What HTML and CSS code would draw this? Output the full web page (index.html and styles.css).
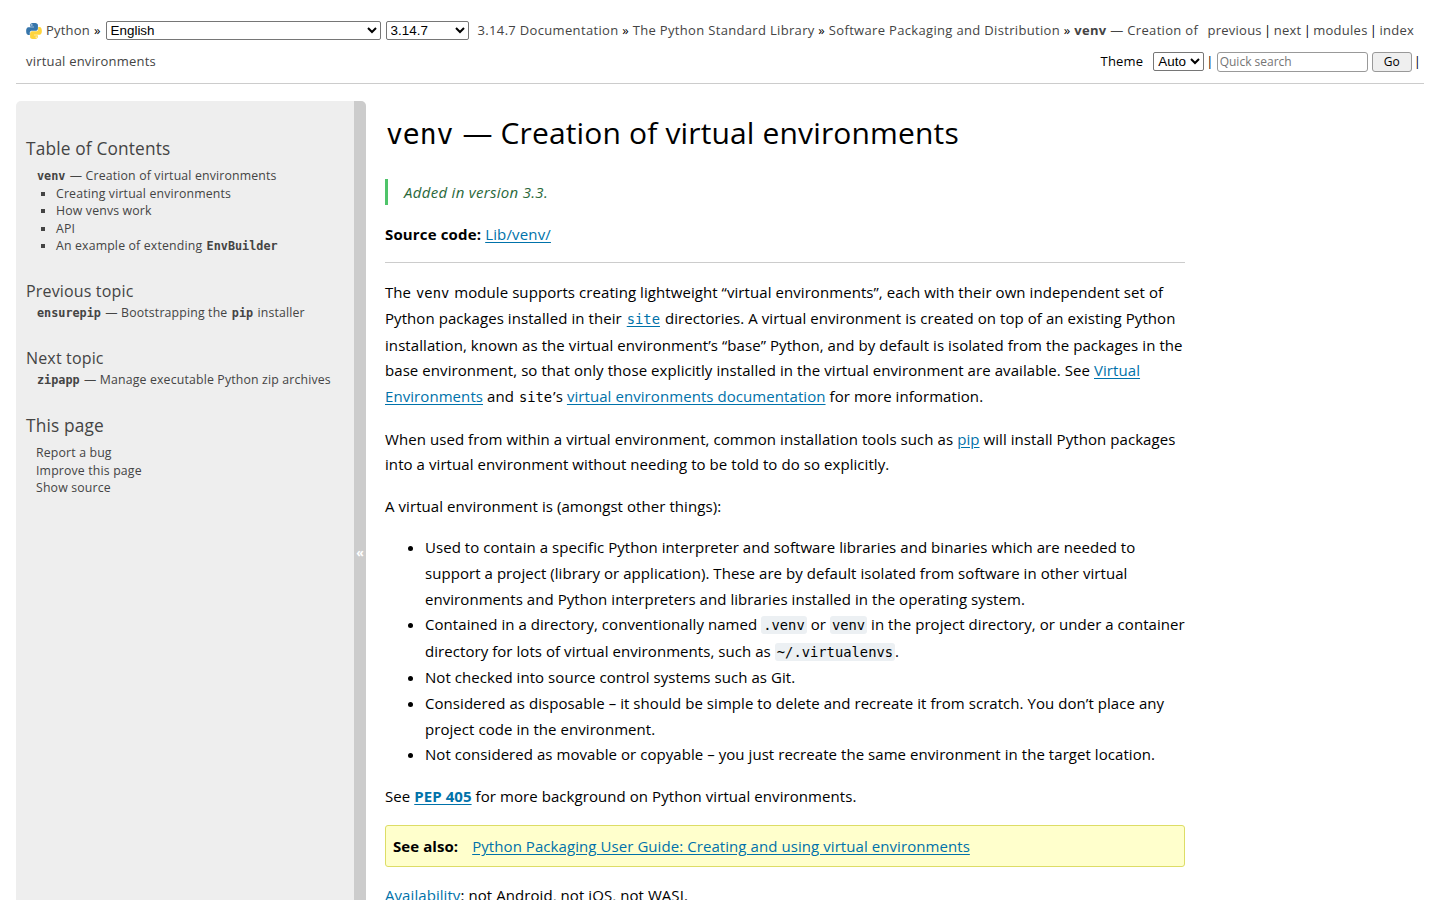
FILE: index.html
```
<!DOCTYPE html>
<html lang="en">
<head>
    <meta charset="UTF-8">
    <meta name="viewport" content="width=device-width, initial-scale=1.0">
    <title>venv — Creation of virtual environments</title>
    <link rel="stylesheet" href="styles.css">
</head>
<body>
    <nav class="related">
        <div class="row">
            <div class="crumbs">
                <svg class="logo" viewBox="0 0 110 110">
                    <path fill="#3776ab" d="M54 0C28 0 29 12 29 12v13h26v4H19S1 27 1 55s16 27 16 27h9V69s-1-16 15-16h26s15 0 15-15V14S84 0 54 0zM40 8a5 5 0 1 1 0 10 5 5 0 0 1 0-10z"/>
                    <path fill="#ffd43b" d="M56 110c26 0 25-12 25-12V85H55v-4h36s18 2 18-26-16-27-16-27h-9v13s1 16-15 16H43s-15 0-15 15v24s-2 14 28 14zm14-8a5 5 0 1 1 0-10 5 5 0 0 1 0 10z"/>
                </svg>
                <a class="home" href="#">Python</a> <span class="sep">»</span>
                <select class="language"><option>English</option></select>
                <select class="version"><option>3.14.7</option></select>
                <span class="path"><a href="#">3.14.7 Documentation</a> » <a href="#">The Python Standard Library</a> » <a href="#">Software Packaging and Distribution</a> » <a href="#"><b>venv</b> — Creation of</a></span>
            </div>
            <div class="links"><a href="#">previous</a> | <a href="#">next</a> | <a href="#">modules</a> | <a href="#">index</a></div>
        </div>
        <div class="row">
            <a href="#">virtual environments</a>
            <form class="tools">
                <label for="theme">Theme</label>
                <select id="theme"><option>Auto</option></select>
                <span class="bar">|</span>
                <input type="text" placeholder="Quick search">
                <input type="submit" value="Go">
                <span class="bar last">|</span>
            </form>
        </div>
    </nav>

    <div class="document">
        <aside class="sidebar">
            <div class="sidebar-text">
                <h3>Table of Contents</h3>
                <ul class="toc">
                    <li><a href="#"><code>venv</code> — Creation of virtual environments</a>
                        <ul>
                            <li><a href="#">Creating virtual environments</a></li>
                            <li><a href="#">How venvs work</a></li>
                            <li><a href="#">API</a></li>
                            <li><a href="#">An example of extending <code>EnvBuilder</code></a></li>
                        </ul>
                    </li>
                </ul>
                <h4>Previous topic</h4>
                <p><a href="#"><code>ensurepip</code> — Bootstrapping the <code>pip</code> installer</a></p>
                <h4>Next topic</h4>
                <p><a href="#"><code>zipapp</code> — Manage executable Python zip archives</a></p>
                <h3 class="this-page">This page</h3>
                <ul class="page-links">
                    <li><a href="#">Report a bug</a></li>
                    <li><a href="#">Improve this page</a></li>
                    <li><a href="#">Show source</a></li>
                </ul>
            </div>
            <div class="collapse">«</div>
        </aside>

        <main>
            <h1><code>venv</code> — Creation of virtual environments</h1>
            <div class="versionadded">Added in version 3.3.</div>
            <p class="source"><strong>Source code:</strong> <a href="#">Lib/venv/</a></p>
            <hr>
            <p>The <code>venv</code> module supports creating lightweight “virtual environments”, each with their own independent set of<br>
            Python packages installed in their <a href="#"><code>site</code></a> directories. A virtual environment is created on top of an existing Python<br>
            installation, known as the virtual environment’s “base” Python, and by default is isolated from the packages in the<br>
            base environment, so that only those explicitly installed in the virtual environment are available. See <a href="#">Virtual<br>
            Environments</a> and <code>site</code>’s <a href="#">virtual environments documentation</a> for more information.</p>
            <p>When used from within a virtual environment, common installation tools such as <a href="#">pip</a> will install Python packages<br>
            into a virtual environment without needing to be told to do so explicitly.</p>
            <p>A virtual environment is (amongst other things):</p>
            <ul>
                <li>Used to contain a specific Python interpreter and software libraries and binaries which are needed to<br>
                support a project (library or application). These are by default isolated from software in other virtual<br>
                environments and Python interpreters and libraries installed in the operating system.</li>
                <li>Contained in a directory, conventionally named <code class="lit">.venv</code> or <code class="lit">venv</code> in the project directory, or under a container<br>
                directory for lots of virtual environments, such as <code class="lit">~/.virtualenvs</code>.</li>
                <li>Not checked into source control systems such as Git.</li>
                <li>Considered as disposable – it should be simple to delete and recreate it from scratch. You don’t place any<br>
                project code in the environment.</li>
                <li>Not considered as movable or copyable – you just recreate the same environment in the target location.</li>
            </ul>
            <p>See <a href="#"><strong>PEP 405</strong></a> for more background on Python virtual environments.</p>
            <div class="seealso"><strong>See also:</strong><a href="#">Python Packaging User Guide: Creating and using virtual environments</a></div>
            <p><a class="plain" href="#">Availability</a>: not Android, not iOS, not WASI.</p>
        </main>
    </div>
</body>
</html>
```
FILE: styles.css
```
* {
    box-sizing: border-box;
}
body {
    margin: 0;
    height: 900px;
    overflow: hidden;
    padding: 15px 16px 0;
    font-family: "Open Sans", "Noto Sans", sans-serif;
    font-size: 15px;
    line-height: 25.6px;
    color: #000;
    background: #fff;
    white-space: nowrap;
}
code {
    font-family: "DejaVu Sans Mono", monospace;
    letter-spacing: 0;
}
.related {
    height: 69px;
    padding: 0 10px;
    border-bottom: 1px solid #ccc;
    font-size: 13px;
    line-height: 31px;
    letter-spacing: 0.2px;
}
.related a {
    color: #444;
    text-decoration: none;
}
.row, .crumbs, .tools {
    display: flex;
    align-items: center;
}
.row {
    height: 31px;
    justify-content: space-between;
}
.logo {
    width: 16px;
    height: 16px;
    margin-right: 4px;
}
.sep {
    margin: 0 5px 0 4px;
}
.path {
    letter-spacing: 0.33px;
}
.links {
    word-spacing: -1.4px;
    letter-spacing: 0.25px;
}
select {
    height: 19px;
    padding: 0;
    border: 1px solid #767676;
    border-radius: 2px;
    background: #fff;
    color: #000;
    font-family: "Liberation Sans", sans-serif;
    font-size: 13.4px;
}
.language {
    width: 275px;
    margin-right: 5px;
}
.version {
    width: 83px;
    margin-right: 9px;
}
#theme {
    width: 51px;
    margin: 0 2px 0 10px;
}
input {
    height: 20px;
    font-family: "Open Sans", sans-serif;
    font-size: 12px;
    border: 1px solid #999;
    border-radius: 3px;
}
input[type="text"] {
    width: 151px;
    padding: 0 2px;
    margin: 0 4px 0 3px;
}
input[type="submit"] {
    width: 40px;
    padding: 0;
    background: #efefef;
}
.last {
    margin: 0 -7px 0 2px;
}
.document {
    display: flex;
    margin-top: 17px;
}
.sidebar {
    display: flex;
    flex: none;
    width: 350px;
    height: 799px;
    border-radius: 5px 5px 0 0;
    overflow: hidden;
    background: #eee;
    color: #444;
    font-size: 12.3px;
    line-height: 17.6px;
    letter-spacing: 0.16px;
}
.sidebar-text {
    flex: 1;
    padding: 36px 10px 0;
}
.sidebar a {
    color: #444;
    text-decoration: none;
}
.sidebar code {
    padding: 0 1px;
    font-weight: bold;
    font-size: 11.8px;
    line-height: 1;
}
.sidebar ul {
    margin: 0;
    padding: 0;
    list-style: none;
}
.sidebar h3, .sidebar h4 {
    margin: 0;
    font-weight: normal;
}
.sidebar h3 {
    font-size: 17.3px;
    line-height: 24px;
}
.sidebar h4 {
    margin-top: 25px;
    font-size: 16px;
    line-height: 22px;
}
.sidebar .toc {
    margin: 6px 0 0 10px;
}
.sidebar .toc ul {
    padding-left: 20px;
    list-style: square;
}
.sidebar p {
    margin: 2px 0 0 10px;
}
.sidebar .this-page {
    margin-top: 26px;
}
.sidebar .page-links {
    margin: 6px 0 0 10px;
}
.collapse {
    display: flex;
    align-items: center;
    justify-content: center;
    width: 12px;
    padding-top: 105px;
    background: #ccc;
    color: #fff;
    font-weight: bold;
}
main {
    width: 800px;
    margin-left: 19px;
    letter-spacing: 0.07px;
}
main a {
    color: #0072aa;
    text-underline-offset: 2px;
}
main code {
    padding: 0 1px;
    font-size: 13.8px;
}
h1 {
    margin: 9px 0 23px;
    font-size: 30px;
    font-weight: normal;
    line-height: 46px;
    letter-spacing: 0.15px;
}
h1 code {
    font-size: 28px;
    line-height: 1;
}
.versionadded {
    border-left: 3px solid #4fc46a;
    padding: 1px 0 0 16px;
    color: #2a683a;
    font-style: italic;
    line-height: 25px;
    letter-spacing: 0.3px;
}
main p {
    margin: 16px 0;
}
main .source {
    margin: 17px 0 0;
    letter-spacing: 0.15px;
}
hr {
    margin: 14px 0 17px;
    border: 0;
    border-top: 1px solid #ccc;
}
main ul {
    margin: 15px 0 16.6px;
    padding-left: 40px;
    letter-spacing: 0.055px;
}
main .lit {
    padding: 1px 2px;
    border-radius: 3px;
    background: #ecf0f3;
}
.seealso {
    height: 42px;
    margin-top: -1px;
    padding: 8px 7px;
    border: 1px solid #dd6;
    border-radius: 3px;
    background: #ffc;
}
.seealso strong {
    margin-right: 14px;
}
.plain {
    text-decoration: none;
}
```
